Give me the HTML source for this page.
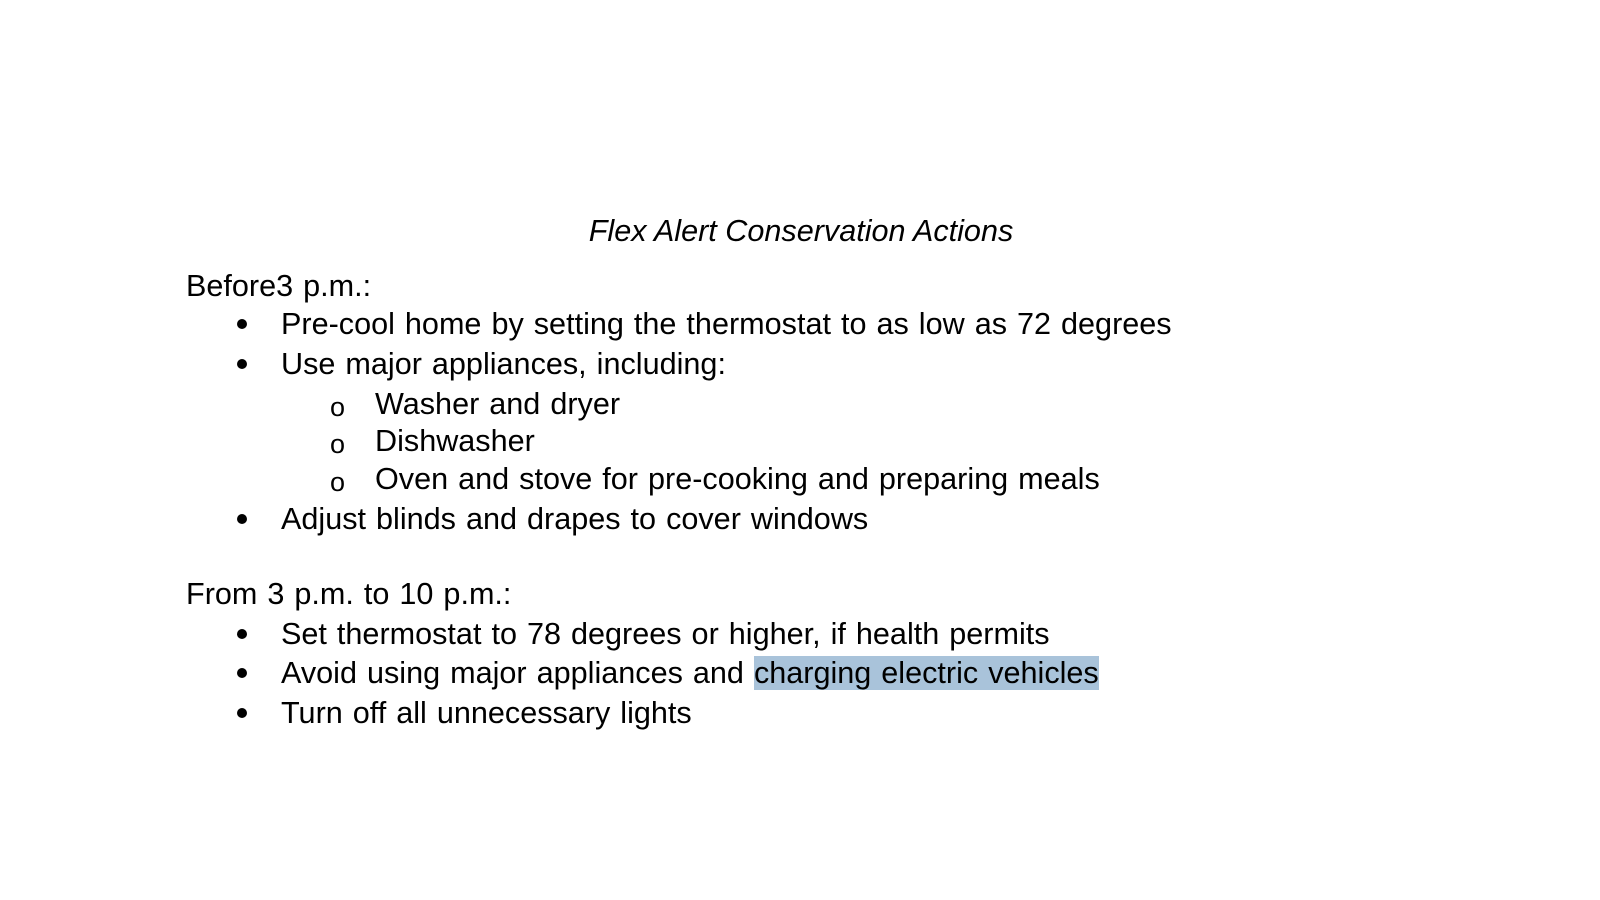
<!DOCTYPE html>
<html><head><meta charset="utf-8"><style>
body{margin:0;width:1600px;height:900px;background:#fff;position:relative;overflow:hidden;font-family:"Liberation Sans",Arial,sans-serif;font-size:30.6px;word-spacing:1.5px;color:#000}
.l{position:absolute;line-height:36px;white-space:nowrap}
.b{position:absolute;width:10px;height:10px;border-radius:50%;background:#000}
.o{position:absolute;font-size:27px;line-height:36px}
.hl{background:#a9c3da;padding:0}
</style></head><body>
<div class="l" style="left:401px;width:800px;text-align:center;top:213px;font-style:italic;word-spacing:0">Flex Alert Conservation Actions</div>
<div class="l" style="left:186px;top:268px">Before3 p.m.:</div>
<div class="b" style="left:237px;top:319px"></div>
<div class="l" style="left:281px;top:306px">Pre-cool home by setting the thermostat to as low as 72 degrees</div>
<div class="b" style="left:237px;top:359px"></div>
<div class="l" style="left:281px;top:346px">Use major appliances, including:</div>
<div class="o" style="left:330px;top:389px">o</div>
<div class="l" style="left:375px;top:386px">Washer and dryer</div>
<div class="o" style="left:330px;top:426px">o</div>
<div class="l" style="left:375px;top:423px">Dishwasher</div>
<div class="o" style="left:330px;top:464px">o</div>
<div class="l" style="left:375px;top:461px">Oven and stove for pre-cooking and preparing meals</div>
<div class="b" style="left:237px;top:514px"></div>
<div class="l" style="left:281px;top:501px">Adjust blinds and drapes to cover windows</div>
<div class="l" style="left:186px;top:576px">From 3 p.m. to 10 p.m.:</div>
<div class="b" style="left:237px;top:629px"></div>
<div class="l" style="left:281px;top:616px">Set thermostat to 78 degrees or higher, if health permits</div>
<div class="b" style="left:237px;top:668px"></div>
<div class="l" style="left:281px;top:655px">Avoid using major appliances and <span class="hl">charging electric vehicles</span></div>
<div class="b" style="left:237px;top:708px"></div>
<div class="l" style="left:281px;top:695px">Turn off all unnecessary lights</div>
</body></html>
